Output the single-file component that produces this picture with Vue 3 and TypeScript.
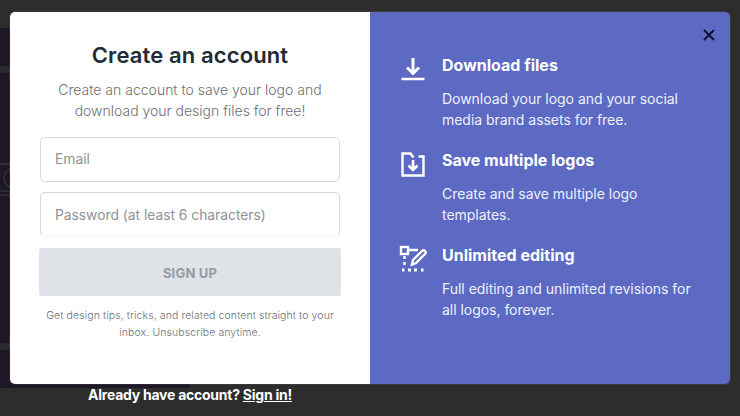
<script setup lang="ts">
interface Feature { title: string; lines: string[]; icon: string }
const features: Feature[] = [
  { title: 'Download files', lines: ['Download your logo and your social', 'media brand assets for free.'], icon: 'dl' },
  { title: 'Save multiple logos', lines: ['Create and save multiple logo', 'templates.'], icon: 'save' },
  { title: 'Unlimited editing', lines: ['Full editing and unlimited revisions for', 'all logos, forever.'], icon: 'edit' },
]
</script>

<template>
  <div class="page">
    <div class="backdrop">
      <span class="band band-a"></span>
      <span class="band band-b"></span>
      <svg class="art" width="12" height="36" viewBox="0 0 12 36" fill="none" stroke="#34323a" stroke-width="1.500">
        <path d="M0 1h12M12 6c-5 0-8 4-8 9s3 9 8 9M0 28h12M0 32h12" />
      </svg>
    </div>
    <div class="modal">
      <section class="left">
        <h1>Create an account</h1>
        <p class="sub">Create an account to save your logo and<br />download your design files for free!</p>
        <div class="field">Email</div>
        <div class="field pw">Password (at least 6 characters)</div>
        <button class="signup">SIGN UP</button>
        <p class="fine">Get design tips, tricks, and related content straight to your<br />inbox. Unsubscribe anytime.</p>
      </section>
      <section class="right">
        <svg class="close" width="12" height="12" viewBox="0 0 12 12"><path d="M1 1l10 10M11 1L1 11" stroke="#0d1030" stroke-width="1.800" fill="none" /></svg>
        <div v-for="f in features" :key="f.title" class="feature">
          <svg class="icon" width="28" height="28" viewBox="0 0 28 28" fill="none" stroke="#fff" stroke-width="2.400">
            <template v-if="f.icon === 'dl'">
              <path d="M14 3v15" stroke-width="3" />
              <path d="M8 12.500l6 6 6-6" stroke-width="3" />
              <path d="M2.500 24h23" stroke-width="2.600" />
            </template>
            <template v-else-if="f.icon === 'save'">
              <path d="M19.500 6.500h5v19h-21v-22h8l3 4" />
              <path d="M14 10v10M9.500 15.500l4.500 4.500 4.500-4.500" stroke-width="2.600" />
            </template>
            <template v-else>
              <rect x="2" y="2" width="7" height="7" />
              <path d="M9 5h10" />
              <path d="M5.500 11v3M5.500 17v3" />
              <path d="M3 25h2.500M9 25h3M15 25h3M22 25h2.500" stroke-width="2.800" />
              <path d="M13 19.500l1-4.500 9-9c1-1 2-1 3 0s1 2 0 3l-9 9z" />
            </template>
          </svg>
          <div class="copy">
            <h2>{{ f.title }}</h2>
            <p>{{ f.lines[0] }}<br />{{ f.lines[1] }}</p>
          </div>
        </div>
      </section>
    </div>
    <p class="already">Already have account? <a>Sign in!</a></p>
  </div>
</template>

<style>
body { margin: 0; background: #2c2c2c; }
</style>

<style scoped>
.page {
  position: relative;
  width: 740px;
  height: 416px;
  overflow: hidden;
  background: #2d2d2d;
  font-family: Inter, "Noto Sans", sans-serif;
  padding-top: 12px;
  box-sizing: border-box;
}
.backdrop {
  position: absolute;
  left: 0;
  top: 28px;
  width: 190px;
  height: 360px;
  background: #1e1826;
}
.band {
  position: absolute;
  left: 0;
  width: 100%;
  height: 7px;
  background: #2a2a2c;
}
.band-a { top: 38px; }
.band-b { top: 315px; }
.art {
  position: absolute;
  left: 0;
  top: 135px;
}
.modal {
  position: relative;
  display: flex;
  width: 720px;
  height: 372px;
  margin-left: 10px;
  border-radius: 5px;
  overflow: hidden;
  box-shadow: 0 0 0 1px rgba(255, 255, 255, 0.06);
}
.left {
  width: 360px;
  background: #fff;
  box-sizing: border-box;
  padding: 28px 29px 0;
  text-align: center;
}
h1 {
  margin: 0;
  font-size: 22px;
  line-height: 30px;
  font-weight: 600;
  letter-spacing: 0.12px;
  color: #212b36;
}
.sub {
  margin: 9px 0 0;
  font-size: 14px;
  line-height: 21px;
  font-weight: 300;
  color: #6b6f76;
}
.field {
  box-sizing: border-box;
  margin: 16px 1px 0;
  height: 45px;
  border: 1px solid #d3d9e2;
  border-radius: 5px;
  padding: 0 14px;
  font-size: 13.800px;
  line-height: 42px;
  text-align: left;
  color: #8e9298;
}
.field.pw {
  margin-top: 10px;
  line-height: 44px;
  border-bottom-color: #f2f3f6;
}
.signup {
  display: block;
  width: 302px;
  height: 48px;
  margin-top: 11px;
  padding: 2px 0 0;
  border: 0;
  border-radius: 3px;
  background: #dfe3e8;
  color: #919aa3;
  font-family: inherit;
  font-size: 13px;
  font-weight: 700;
  letter-spacing: 0.2px;
}
.fine {
  margin: 11px 0 0;
  font-size: 10.500px;
  line-height: 17px;
  font-weight: 300;
  letter-spacing: 0.1px;
  color: #6b6f76;
}
.right {
  position: relative;
  flex: 1;
  background: #5c6ac4;
  padding: 43px 28px 0 27px;
  box-sizing: border-box;
  color: #fff;
}
.close {
  position: absolute;
  right: 15px;
  top: 17px;
}
.feature {
  display: flex;
  gap: 15px;
  height: 95px;
}
.icon {
  flex: none;
  margin-top: 0;
  margin-left: 2px;
}
h2 {
  margin: 0 0 12px;
  font-size: 16px;
  line-height: 21px;
  font-weight: 700;
}
.copy p {
  margin: 0;
  font-size: 14px;
  line-height: 21px;
  font-weight: 400;
  letter-spacing: -0.03px;
  color: #eef0fb;
}
.already {
  margin: 0;
  padding-top: 2px;
  width: 380px;
  text-align: center;
  font-size: 14px;
  line-height: 18px;
  font-weight: 700;
  letter-spacing: -0.25px;
  color: #fff;
  position: relative;
}
.already a { text-decoration: underline; }
</style>
